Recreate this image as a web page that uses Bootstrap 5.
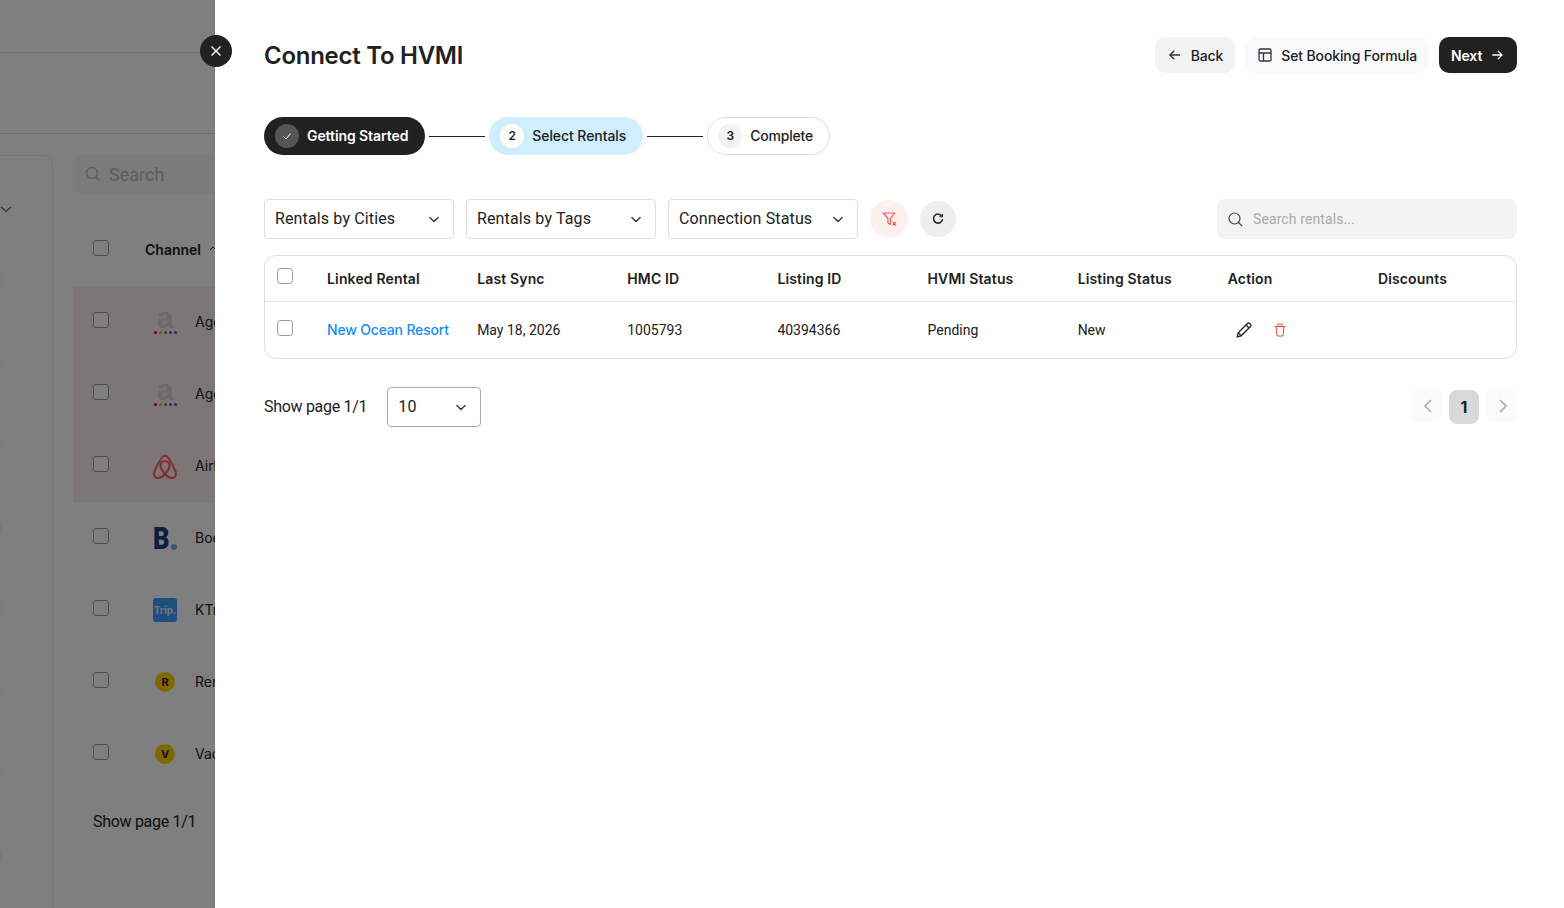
<!DOCTYPE html>
<html lang="en">
<head>
  <meta charset="UTF-8" />
  <meta name="viewport" content="width=device-width, initial-scale=1.0"/>
  <title>Connect To HVMI</title>
  <link href="https://cdn.jsdelivr.net/npm/bootstrap@5.3.2/dist/css/bootstrap.min.css" rel="stylesheet">
  <style>
    html, body { height: 100%; overflow: hidden; }
    body { font-family: Inter, "Liberation Sans", sans-serif; color: #212121; background: #fff; }

    /* page behind the drawer */
    .behind { height: 908px; overflow: hidden; }
    .behind-top { height: 53px; border-bottom: 1px solid #ddd; }
    .behind-head { height: 81px; border-bottom: 1px solid #ddd; margin-bottom: 21px; }
    .behind-side { width: 53px; height: 760px; border: 1px solid #eee; border-left: 0; border-top-right-radius: 8px; flex-shrink: 0; }
    .side-chev { margin: 47px 0 0 0; display: block; }
    .side-dots { margin: 56px 0 0 -20px; gap: 60px; }
    .side-dot { width: 22px; height: 22px; border-radius: 50%; background: #f4f4f4; }
    .behind-main { margin-left: 20px; width: 300px; flex-shrink: 0; }
    .behind-search { height: 38px; width: 300px; background: #f6f6f6; border-radius: 8px; padding-left: 12px; font-family: Roboto, sans-serif; font-size: 18px; color: #bbb; gap: 8px; margin-bottom: 21px; }
    .behind-row { height: 72px; padding-left: 20px; font-size: 14px; }
    .behind-row .form-check-input, .pick { margin: 0; width: 16px; height: 16px; border-color: #999; border-radius: 3px; flex-shrink: 0; }
    .behind-head-row { font-weight: 600; padding-top: 28px; height: 72px; margin-top: -2px; margin-bottom: 2px; }
    .channel-head { margin-left: 36px; margin-top: -1px; white-space: nowrap; }
    .channel-sort { margin-left: 8px; margin-top: 5px; }
    .behind-body-row { padding-top: 26px; }
    .behind-body-row > span { margin-top: -1px; white-space: nowrap; }
    .behind-pink { background: #faecec; }
    .behind-logo { width: 24px; margin-left: 44px; margin-right: 18px; flex-shrink: 0; display: flex; justify-content: center; margin-top: -2px; height: 24px; }
    .agoda-logo { flex-direction: column; align-items: center; line-height: 1; font-family: "Liberation Sans", sans-serif; font-weight: 700; font-size: 30px; color: #d4d4d4; height: 24px; }
    .agoda-letter { height: 18px; line-height: 14px; }
    .agoda-dots { gap: 2px; margin-top: 2px; }
    .agoda-dots i { width: 3px; height: 3px; border-radius: 50%; display: block; }
    .book-logo { justify-content: flex-start; align-items: flex-end; font-family: Roboto, sans-serif; font-weight: 900; font-size: 32px; line-height: 24px; color: #1f3a80; }
    .book-letter { display: inline-block; transform: scaleX(.8); transform-origin: left center; width: 17px; }
    .book-logo em { display: block; width: 6px; height: 6px; border-radius: 50%; background: #5ab4ec; margin-bottom: 0; margin-left: 1px; flex-shrink: 0; }
    .trip-logo { background: #3a9cff; color: #eee; border-radius: 3px; font-size: 10px; font-weight: 700; line-height: 24px; text-align: center; display: block; }
    .letter-logo { width: 20px; height: 20px; margin: 2px; border-radius: 50%; background: #ffd000; color: #212121; font-size: 11px; font-weight: 700; text-align: center; line-height: 20px; }
    .behind-foot { padding-left: 20px; padding-top: 20px; font-family: Roboto, sans-serif; letter-spacing: -.3px; font-size: 16px; }

    /* overlay + drawer */
    .shade { position: fixed; inset: 0; background: rgba(0,0,0,.5); }
    .drawer { position: fixed; top: 0; left: 215px; right: 0; bottom: 0; background: #fff; padding: 37px 47px 0 49px; }
    .drawer-close { position: fixed; left: 200px; top: 35px; width: 32px; height: 32px; border-radius: 50%; background: #212121; border: 0; padding: 0; }
    .drawer-head { height: 36px; }
    .drawer-title { font-size: 24px; font-weight: 600; line-height: 36px; margin: 2px 0 0; letter-spacing: -.27px; color: #212121; }

    .act-group { gap: 10px; }
    .act-btn { height: 36px; border-radius: 10px; font-size: 14px; font-weight: 500; padding: 0 12px; gap: 8px; border: 0; color: #212121; letter-spacing: -.13px; }
    .act-back { background: #f3f3f3; width: 80px; justify-content: center; }
    .act-formula { background: #f8f9fa; }
    .act-next { background: #212121; color: #fff; font-weight: 600; width: 78px; justify-content: center; }
    .act-next:hover { background: #212121; color: #fff; }

    .stepper { margin-top: 44px; margin-bottom: 44px; height: 38px; gap: 4px; }
    .step-pill { height: 38px; border-radius: 19px; padding: 0 16px 1px 10px; gap: 8px; font-size: 14px; font-weight: 500; border: 1px solid transparent; letter-spacing: -.08px; }
    .step-done { background: #212121; color: #fff; font-weight: 600; }
    .step-now { background: #cfeeff; }
    .step-next { border-color: #ddd; letter-spacing: -.2px; }
    .step-dot { width: 24px; height: 24px; border-radius: 50%; font-size: 12px; font-weight: 600; display: flex; align-items: center; justify-content: center; }
    .step-done .step-dot { background: #555; }
    .step-now .step-dot { background: #fff; }
    .step-next .step-dot { background: #f3f3f3; }
    .step-line { width: 56px; height: 1px; background: #212121; }

    .filter-bar { height: 40px; margin-bottom: 16px; gap: 12px; }
    .filter-sel, .page-sel { height: 40px; font-family: Roboto, sans-serif; font-size: 16px; letter-spacing: .14px; color: #212121; padding: 0 30px 0 10px; border-radius: 4px; background-size: 14px 11px; background-position: right 12px center; }
    .filter-sel { width: 190px; border-color: #ddd; }
    .round-btn { padding: 0; border: 0; border-radius: 50%; display: flex; align-items: center; justify-content: center; }
    .round-clear { width: 38px; height: 38px; background: #fff0f0; }
    .round-clear svg { margin-left: 1px; }
    .round-reload { width: 36px; height: 36px; background: #eee; }
    .rental-search { width: 300px; height: 40px; background: #f3f3f3; border-radius: 8px; padding-left: 11px; gap: 8px; }
    .rental-search input { border: 0; background: transparent; outline: 0; font-family: Roboto, sans-serif; font-size: 14px; letter-spacing: .1px; flex: 1; min-width: 0; color: #212121; padding-bottom: 1px; }
    .rental-search input::placeholder { color: #aaa; }

    .table-box { border: 1px solid #ddd; border-radius: 12px; overflow: hidden; height: 104px; }
    .rental-table { table-layout: fixed; width: 100%; margin: 0; font-family: Roboto, sans-serif; font-size: 14px; }
    .rental-table th, .rental-table td { padding: 0 12px; vertical-align: middle; border: 0; color: #212121; }
    .rental-table thead tr { height: 45px; border-bottom: 1px solid #e5e5e5; }
    .rental-table tbody tr { height: 57px; }
    .rental-table th { font-family: Inter, sans-serif; font-weight: 600; letter-spacing: .15px; }
    .rental-table td:first-child, .rental-table th:first-child { width: 50px; }
    .rental-table td:first-child .pick { display: block; margin-top: -4px; }
    .rental-table th:first-child .pick { display: block; margin-top: -4px; }
    .rental-table td { padding-top: 1px; }
    .rental-table td.link-cell { padding-right: 0; }
    .rental-table .rental-link { color: #1a8cf0; text-decoration: none; font-family: Inter, sans-serif; font-weight: 500; letter-spacing: -.18px; }
    .row-icon { padding: 0; border: 0; background: none; display: block; line-height: 0; }
    .action-icons { gap: 20px; padding-left: 7px; }

    .foot-bar { margin-top: 28px; height: 40px; }
    .foot-label { font-family: Roboto, sans-serif; letter-spacing: -.3px; padding-bottom: 1px; }
    .page-sel { width: 94px; margin-left: 20px; border-color: #aaa; }
    .pager { gap: 8px; margin-top: -2px; }
    .pager-btn { width: 30px; height: 34px; border-radius: 8px; border: 0; padding: 0; background: #fbfbfb; display: flex; align-items: center; justify-content: center; }
    .pager-prev svg { margin-left: 4px; }
    .pager-next svg { margin-left: 2px; }
    .pager-now { background: #d9d9d9; font-weight: 700; font-size: 16px; color: #212121; margin-top: 1px; }
  </style>
</head>
<body>

  <!-- Page behind the drawer -->
  <div class="behind">
    <div class="behind-top"></div>
    <div class="behind-head"></div>
    <div class="d-flex">
      <div class="behind-side">
        <svg class="side-chev" width="12" height="12" viewBox="0 0 12 12" fill="none" stroke="#666" stroke-width="1.3"><path d="M1 4l5 4.5L11 4"/></svg>
        <div class="side-dots d-flex flex-column">
          <div class="side-dot"></div><div class="side-dot"></div><div class="side-dot"></div><div class="side-dot"></div>
          <div class="side-dot"></div><div class="side-dot"></div><div class="side-dot"></div><div class="side-dot"></div>
        </div>
      </div>
      <div class="behind-main">
        <div class="behind-search d-flex align-items-center">
          <svg width="16" height="16" viewBox="0 0 16 16" fill="none" stroke="#bbb" stroke-width="1.4"><circle cx="7" cy="7" r="5.5"/><path d="M11 11l3.5 3.5"/></svg>
          <span>Search</span>
        </div>
        <div class="behind-row behind-head-row d-flex align-items-start">
          <input class="form-check-input" type="checkbox">
          <span class="channel-head">Channel</span>
          <svg class="channel-sort" width="8" height="6" viewBox="0 0 8 6" fill="none" stroke="#333" stroke-width="1"><path d="M1 5l3-3 3 3"/></svg>
        </div>
        <div class="behind-row behind-body-row behind-pink d-flex align-items-start">
          <input class="form-check-input" type="checkbox">
          <div class="behind-logo agoda-logo"><span class="agoda-letter">a</span><span class="agoda-dots d-flex"><i style="background:#e00"></i><i style="background:#f90"></i><i style="background:#2a2"></i><i style="background:#92c"></i><i style="background:#07c"></i></span></div>
          <span>Agoda</span>
        </div>
        <div class="behind-row behind-body-row behind-pink d-flex align-items-start">
          <input class="form-check-input" type="checkbox">
          <div class="behind-logo agoda-logo"><span class="agoda-letter">a</span><span class="agoda-dots d-flex"><i style="background:#e00"></i><i style="background:#f90"></i><i style="background:#2a2"></i><i style="background:#92c"></i><i style="background:#07c"></i></span></div>
          <span>Agoda</span>
        </div>
        <div class="behind-row behind-body-row behind-pink d-flex align-items-start">
          <input class="form-check-input" type="checkbox">
          <div class="behind-logo">
            <svg width="24" height="26" viewBox="0 0 24 26" fill="none" stroke="#ff5a5f" stroke-width="2"><path d="M12 20c3-3.500 4.500-6 4.500-8.500a4.500 4.500 0 0 0-9 0c0 2.500 1.500 5 4.500 8.500zM12 20c-2.500 3-5 4-7 4-2.500 0-4-2-4-4 0-3 6-14 8-16.500a3.500 3.500 0 0 1 6 0C17 6 23 17 23 20c0 2-1.500 4-4 4-2 0-4.500-1-7-4z"/></svg>
          </div>
          <span>Airbnb</span>
        </div>
        <div class="behind-row behind-body-row d-flex align-items-start">
          <input class="form-check-input" type="checkbox">
          <div class="behind-logo book-logo"><span class="book-letter">B</span><em></em></div>
          <span>Booking</span>
        </div>
        <div class="behind-row behind-body-row d-flex align-items-start">
          <input class="form-check-input" type="checkbox">
          <div class="behind-logo trip-logo">Trip.</div>
          <span>KTrip</span>
        </div>
        <div class="behind-row behind-body-row d-flex align-items-start">
          <input class="form-check-input" type="checkbox">
          <div class="behind-logo"><div class="letter-logo">R</div></div>
          <span>Rentals</span>
        </div>
        <div class="behind-row behind-body-row d-flex align-items-start">
          <input class="form-check-input" type="checkbox">
          <div class="behind-logo"><div class="letter-logo">V</div></div>
          <span>Vacation</span>
        </div>
        <div class="behind-foot">Show page 1/1</div>
      </div>
    </div>
  </div>
  <div class="shade"></div>

  <!-- Drawer -->
  <div class="drawer">
    <div class="drawer-head d-flex align-items-center justify-content-between">
      <h1 class="drawer-title">Connect To HVMI</h1>
      <div class="d-flex act-group">
        <button class="btn act-btn act-back d-flex align-items-center">
          <svg width="16" height="16" viewBox="0 0 16 16" fill="none" stroke="#333" stroke-width="1.4"><path d="M13.500 8H3M7.500 3.500L3 8l4.500 4.500"/></svg>Back
        </button>
        <button class="btn act-btn act-formula d-flex align-items-center">
          <svg width="16" height="16" viewBox="0 0 16 16" fill="none" stroke="#333" stroke-width="1.3"><rect x="2" y="2" width="12" height="12" rx="1.500"/><path d="M2 6h12M6.500 6v8"/></svg>Set Booking Formula
        </button>
        <button class="btn act-btn act-next d-flex align-items-center">Next
          <svg width="16" height="16" viewBox="0 0 16 16" fill="none" stroke="#fff" stroke-width="1.4"><path d="M2.500 8H13M8.500 3.500L13 8l-4.500 4.500"/></svg>
        </button>
      </div>
    </div>

    <div class="stepper d-flex align-items-center">
      <div class="step-pill step-done d-flex align-items-center">
        <span class="step-dot"><svg width="10" height="10" viewBox="0 0 10 10" fill="none" stroke="#fff" stroke-width="1"><path d="M1.500 5.500L4 8l4.500-5.500"/></svg></span>Getting Started
      </div>
      <div class="step-line"></div>
      <div class="step-pill step-now d-flex align-items-center">
        <span class="step-dot">2</span>Select Rentals
      </div>
      <div class="step-line"></div>
      <div class="step-pill step-next d-flex align-items-center">
        <span class="step-dot">3</span>Complete
      </div>
    </div>

    <div class="filter-bar d-flex align-items-center">
      <select class="form-select filter-sel"><option>Rentals by Cities</option></select>
      <select class="form-select filter-sel"><option>Rentals by Tags</option></select>
      <select class="form-select filter-sel"><option>Connection Status</option></select>
      <button class="round-btn round-clear">
        <svg width="16" height="16" viewBox="0 0 16 16" fill="none" stroke="#f25c5c" stroke-width="1.2"><path d="M1.500 2h11L8.500 7.500V11l-.5 2.500-2-1.500V7.500z"/><path d="M10.500 11l3.500 3.500M14 11l-3.500 3.500"/></svg>
      </button>
      <button class="round-btn round-reload">
        <svg width="12" height="12" viewBox="0 0 12 12" fill="none" stroke="#212121" stroke-width="1.500"><path d="M10 3.500A4.500 4.500 0 1 0 10.500 6"/><path d="M7.500 3.800h3V1" stroke-width="1"/></svg>
      </button>
      <div class="rental-search d-flex align-items-center ms-auto">
        <svg width="15" height="15" viewBox="0 0 15 15" fill="none" stroke="#444" stroke-width="1.2" class="flex-shrink-0"><circle cx="6.500" cy="6.500" r="5.500"/><path d="M10.500 10.500l3.500 3.500"/></svg>
        <input type="text" placeholder="Search rentals...">
      </div>
    </div>

    <div class="table-box">
      <table class="table rental-table">
        <thead>
          <tr>
            <th><input class="form-check-input pick" type="checkbox"></th>
            <th>Linked Rental</th><th>Last Sync</th><th>HMC ID</th><th>Listing ID</th><th>HVMI Status</th><th>Listing Status</th><th>Action</th><th>Discounts</th>
          </tr>
        </thead>
        <tbody>
          <tr>
            <td><input class="form-check-input pick" type="checkbox"></td>
            <td class="text-nowrap link-cell"><a href="#" class="rental-link">New Ocean Resort</a></td>
            <td>May 18, 2026</td>
            <td>1005793</td>
            <td>40394366</td>
            <td>Pending</td>
            <td>New</td>
            <td>
              <div class="d-flex align-items-center action-icons">
                <button class="row-icon">
                  <svg width="18" height="18" viewBox="0 0 18 18" fill="none" stroke="#212121" stroke-width="1.300"><path d="M2.200 15.800l1-4L12.500 2.500a1.500 1.500 0 0 1 2.200 0l.8.800a1.500 1.500 0 0 1 0 2.200L6.200 14.800z"/><path d="M11 4l3 3M3.200 11.800l3 3"/></svg>
                </button>
                <button class="row-icon">
                  <svg width="14" height="14" viewBox="0 0 14 14" fill="none" stroke="#ef4444" stroke-width="1"><path d="M1.500 3.500h11M3 3.500l1 9.500h6l1-9.500M5 3.500V1h4v2.500"/></svg>
                </button>
              </div>
            </td>
            <td></td>
          </tr>
        </tbody>
      </table>
    </div>

    <div class="foot-bar d-flex align-items-center">
      <span class="foot-label">Show page 1/1</span>
      <select class="form-select page-sel"><option>10</option></select>
      <div class="pager d-flex ms-auto">
        <button class="pager-btn pager-prev"><svg width="12" height="16" viewBox="0 0 12 16" fill="none" stroke="#aaa" stroke-width="1.600"><path d="M9 2L3 8l6 6"/></svg></button>
        <button class="pager-btn pager-now">1</button>
        <button class="pager-btn pager-next"><svg width="12" height="16" viewBox="0 0 12 16" fill="none" stroke="#aaa" stroke-width="1.600"><path d="M3 2l6 6-6 6"/></svg></button>
      </div>
    </div>
  </div>

  <button class="drawer-close d-flex align-items-center justify-content-center">
    <svg width="12" height="12" viewBox="0 0 12 12" fill="none" stroke="#fff" stroke-width="1.400"><path d="M1.500 1.500l9 9M10.500 1.500l-9 9"/></svg>
  </button>

  <script src="https://cdn.jsdelivr.net/npm/bootstrap@5.3.2/dist/js/bootstrap.bundle.min.js"></script>
</body>
</html>
